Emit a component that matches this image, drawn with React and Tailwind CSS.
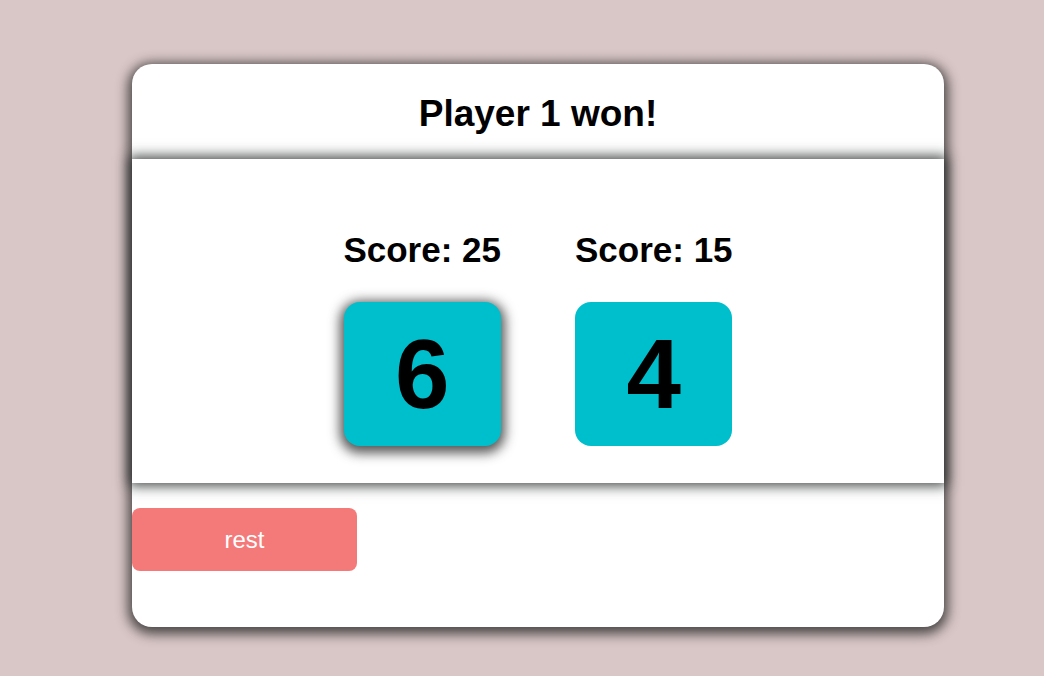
export default function App() {
  const players = [
    { score: 25, die: 6, active: true },
    { score: 15, die: 4, active: false },
  ];

  return (
    <div className="min-h-[676px] w-full bg-[#d9c6c6] pt-[64px] pl-[132px] font-['Liberation_Sans',Arial,sans-serif]">
      <div className="flex w-[812px] flex-col rounded-[20px] bg-white pb-[56px] shadow-[0_3px_12px_4px_rgba(40,40,40,0.8)]">
        <div className="flex h-[95px] items-center justify-center pt-[4px]">
          <h1 className="text-[37px] font-bold text-black">Player 1 won!</h1>
        </div>

        <div className="flex h-[324px] justify-center gap-[74px] bg-white pt-[73px] shadow-[0_0_12px_3px_rgba(40,45,45,0.85)]">
          {players.map((p, i) => (
            <div key={i} className="flex flex-col items-center">
              <p className="text-[35px] leading-[36px] font-bold text-black">
                Score: {p.score}
              </p>
              <div
                className={`mt-[34px] flex h-[144px] w-[157px] items-center justify-center rounded-[16px] bg-[#00bfcc] text-[98px] font-bold text-black ${
                  p.active ? "shadow-[0_3px_12px_4px_rgba(30,30,30,0.75)]" : ""
                }`}
              >
                {p.die}
              </div>
            </div>
          ))}
        </div>

        <div className="mt-[25px]">
          <button className="h-[63px] w-[225px] rounded-[8px] bg-[#f47a7a] text-[24px] text-white">
            rest
          </button>
        </div>
      </div>
    </div>
  );
}
